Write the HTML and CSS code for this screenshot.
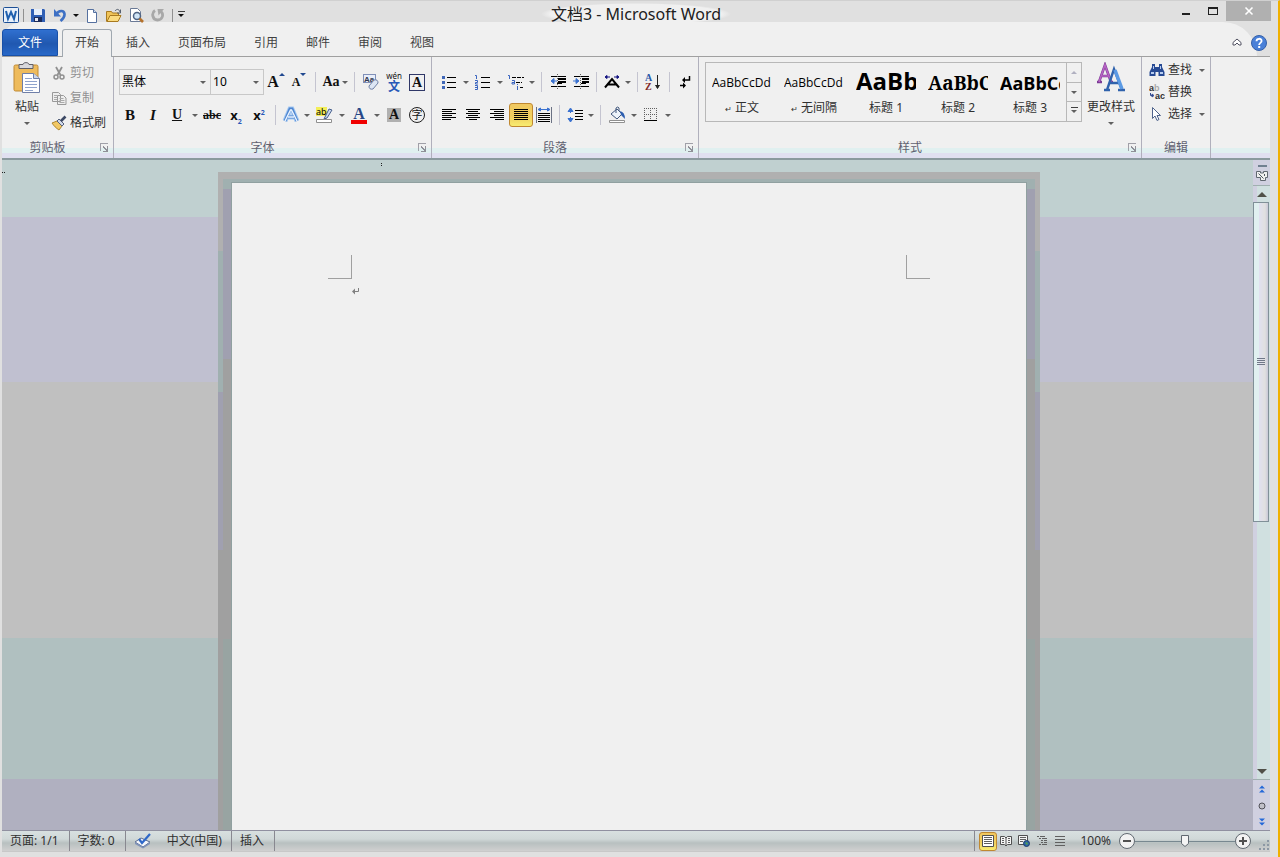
FILE: index.html
```html
<!DOCTYPE html>
<html lang="zh-CN">
<head>
    <meta charset="UTF-8">
    <meta name="viewport" content="width=device-width, initial-scale=1.0">
    <title>文档3 - Microsoft Word</title>
    <link rel="stylesheet" href="styles.css">
</head>
<body>
<div class="window">
    <header class="header">
        <div class="titlebar">
            <div class="quick">
                <button class="quick-button app" aria-label="Word">
                    <svg width="16" height="16" viewBox="0 0 16 16"><rect x=".5" y=".5" width="15" height="15" rx="1" fill="#e8f0fa" stroke="#1c4f96"/><path d="M3 4 5 12 8 5l3 7 2-8" fill="none" stroke="#1f5fae" stroke-width="2"/></svg>
                </button>
                <span class="quick-line"></span>
                <button class="quick-button" aria-label="保存">
                    <svg width="14" height="14" viewBox="0 0 14 14"><path d="M0 1h13l1 1v12H0z" fill="#2f5fb5"/><path d="M3 1h8v6H3z" fill="#e6eefa"/><path d="M3 9h8v5H3z" fill="#1b2c5c"/><path d="M4 10h3v3H4z" fill="#e8e8f0"/></svg>
                </button>
                <button class="quick-button" aria-label="撤消">
                    <svg width="14" height="14" viewBox="0 0 14 14"><path d="M3 6.500C6 2 11 2 11.500 6c.3 3-1.500 5-4 7" fill="none" stroke="#3d70c4" stroke-width="2.600"/><path d="M1 1v7.500h7z" fill="#3d70c4"/></svg>
                </button>
                <button class="quick-drop" aria-label="撤消列表"><i class="arrow dark"></i></button>
                <button class="quick-button" aria-label="新建">
                    <svg width="14" height="15" viewBox="0 0 14 15"><path d="M2.500 1.500h6l3 3v10h-9z" fill="#fff" stroke="#55709f"/><path d="M8.500 1.500v3h3" fill="#cfdcf0" stroke="#55709f"/></svg>
                </button>
                <button class="quick-button" aria-label="打开">
                    <svg width="16" height="15" viewBox="0 0 16 15"><path d="M.5 13.500v-10h5l1 1.500h6v3" fill="#f0c458" stroke="#a87a20"/><path d="M1 13.500 4 7.500h11l-3 6z" fill="#fbdc80" stroke="#a87a20"/><path d="M9 3c2-2.500 4-2 5 1M14.500 1.500V5H11" fill="none" stroke="#556070"/></svg>
                </button>
                <button class="quick-button" aria-label="打印预览">
                    <svg width="15" height="15" viewBox="0 0 15 15"><path d="M1.500 .5h7l3 3v10h-10z" fill="#fff" stroke="#6b7a96"/><circle cx="8" cy="8" r="3.500" fill="#cfe4f6" stroke="#4f6484" stroke-width="1.500"/><path d="m10.500 10.500 3.500 3.500" stroke="#b5722c" stroke-width="2.600"/></svg>
                </button>
                <button class="quick-button" aria-label="恢复">
                    <svg width="14" height="14" viewBox="0 0 14 14"><path d="M4 2.500C0 5 1.500 12 6.500 12S13 6.500 10 3.500" fill="none" stroke="#a8a8a8" stroke-width="2.800"/><path d="M6.500 1H13L7.500 7.500z" fill="#a8a8a8"/></svg>
                </button>
                <span class="quick-line"></span>
                <button class="quick-drop" aria-label="自定义快速访问工具栏"><i class="arrow dark bar"></i></button>
            </div>
            <h1 class="title">文档3 - Microsoft Word</h1>
            <div class="controls">
                <button class="control" aria-label="最小化"><svg width="10" height="10" viewBox="0 0 10 10"><path d="M1 7h8v2H1z" fill="#202020"/></svg></button>
                <button class="control" aria-label="最大化"><svg width="10" height="10" viewBox="0 0 10 10"><path d="M0 1h10v8H0z" fill="#202020"/><path d="M1 3h8v5H1z" fill="#e0e0e0"/></svg></button>
                <button class="control close" aria-label="关闭"><svg width="10" height="10" viewBox="0 0 10 10"><path d="m1.500 1.500 7 7m0-7-7 7" stroke="#fff" stroke-width="1.600"/></svg></button>
            </div>
        </div>
        <nav class="tabs">
            <button class="tab file">文件</button>
            <button class="tab active">开始</button>
            <button class="tab">插入</button>
            <button class="tab">页面布局</button>
            <button class="tab">引用</button>
            <button class="tab">邮件</button>
            <button class="tab">审阅</button>
            <button class="tab">视图</button>
            <span class="spacer"></span>
            <button class="tab-icon" aria-label="功能区最小化"><svg width="10" height="9" viewBox="0 0 10 9"><path d="M1 4.500 5 1l4 3.500V7H7L5 5 3 7H1z" fill="#fff" stroke="#505060"/></svg></button>
            <button class="tab-icon" aria-label="帮助"><svg width="16" height="16" viewBox="0 0 16 16"><circle cx="8" cy="8" r="7.500" fill="#4a80d8" stroke="#3560a8"/><path d="M5.500 6.200C5.500 3 10.600 3 10.600 6c0 1.800-2.500 2-2.500 4" fill="none" stroke="#fff" stroke-width="1.800"/><path d="M7.200 11h2v2h-2z" fill="#fff"/></svg></button>
        </nav>
    </header>

    <section class="ribbon">
        <div class="group">
            <div class="group-body clipboard">
                <button class="big-button paste">
                    <svg width="28" height="32" viewBox="0 0 28 32"><rect x="1" y="3" width="24" height="26" rx="1.500" fill="#eebb5c" stroke="#c08a34"/><path d="M6 2.500h4C10 0 16 0 16 2.500h4v4H6z" fill="#d8d8dc" stroke="#606068"/><path d="M9.500 11.500h11l6 5v14h-17z" fill="#fff" stroke="#6f7fa8"/><path d="M20.500 11.500v5h6" fill="#cdd7ea" stroke="#6f7fa8"/><path d="M12 16.500h7M12 19.500h12M12 22.500h12M12 25.500h12M12 28.500h8" stroke="#8fa3cc"/></svg>
                    <span>粘贴</span>
                    <i class="arrow"></i>
                </button>
                <div class="stack">
                    <button class="text-button" disabled>
                        <svg width="16" height="16" viewBox="0 0 16 16"><path d="M5 2 9.500 10M11 2 6.500 10" stroke="#909090" stroke-width="1.800"/><circle cx="5" cy="12" r="2" fill="none" stroke="#909090" stroke-width="1.500"/><circle cx="11" cy="12" r="2" fill="none" stroke="#909090" stroke-width="1.500"/></svg>
                        剪切
                    </button>
                    <button class="text-button" disabled>
                        <svg width="16" height="16" viewBox="0 0 16 16"><path d="M1.500 2.500h6l2 2v7h-8zM6.500 5.500h6l2.500 2.500v6.500H6.500z" fill="#eee" stroke="#999"/><path d="M3 5.500h3M3 7.500h3M3 9.500h3M8.500 8.500h4M8.500 10.500h5M8.500 12.500h5" stroke="#aaa"/></svg>
                        复制
                    </button>
                    <button class="text-button">
                        <svg width="16" height="16" viewBox="0 0 16 16"><path d="m1 8 5-2 5 5-3 4C5 13 3 11 1 8z" fill="#f2c864" stroke="#b08830"/><path d="m6 6 2-2 5 5-2 2z" fill="#d0d8e8" stroke="#56627c"/><path d="m10 6 4.500-4.500" stroke="#3c4864" stroke-width="2.600"/></svg>
                        格式刷
                    </button>
                </div>
            </div>
            <div class="group-label">剪贴板<button class="launcher" aria-label="剪贴板选项"></button></div>
        </div>

        <div class="group">
            <div class="group-body rows font-tools">
                <div class="row">
                    <select class="combo font-name" aria-label="字体"><option>黑体</option></select>
                    <select class="combo font-size" aria-label="字号"><option>10</option></select>
                    <button class="tool wide" aria-label="增大字体"><span class="serif large">A</span><i class="mark up"></i></button>
                    <button class="tool" aria-label="缩小字体"><span class="serif small">A</span><i class="mark down"></i></button>
                    <span class="sep wide"></span>
                    <button class="tool case" aria-label="更改大小写"><span class="serif">Aa</span><i class="arrow"></i></button>
                    <span class="sep wide"></span>
                    <button class="tool" aria-label="清除格式"><svg width="18" height="18" viewBox="0 0 18 18"><rect x="1.500" y="1.500" width="12" height="8" fill="#e8eefa" stroke="#8090b8"/><text x="2" y="9" class="tiny">Aa</text><path d="m7 13 5-6q4-1 4 3l-5 6q-4 1-4-3z" fill="#dde6f4" stroke="#6f80a4"/></svg></button>
                    <button class="tool wide" aria-label="拼音指南"><span class="pinyin"><small>wén</small><b>文</b></span></button>
                    <button class="tool" aria-label="字符边框"><span class="boxed serif">A</span></button>
                </div>
                <div class="row">
                    <button class="tool" aria-label="加粗"><span class="serif bold">B</span></button>
                    <button class="tool wide" aria-label="倾斜"><span class="serif italic">I</span></button>
                    <button class="tool wide" aria-label="下划线"><span class="serif underline">U</span></button>
                    <button class="drop" aria-label="下划线样式"><i class="arrow"></i></button>
                    <button class="tool wide" aria-label="删除线"><span class="serif strike">abc</span></button>
                    <button class="tool wide" aria-label="下标"><span class="sans">x<sub>2</sub></span></button>
                    <button class="tool" aria-label="上标"><span class="sans">x<sup>2</sup></span></button>
                    <span class="sep wide"></span>
                    <button class="tool narrow" aria-label="文本效果"><svg width="18" height="18" viewBox="0 0 18 18"><path d="M3 15 8 3h2l5 12M6 11h6" fill="none" stroke="#a4c8f2" stroke-width="5"/><path d="M3 15 8 3h2l5 12M6 11h6" fill="none" stroke="#4f86d0" stroke-width="3"/><path d="M3 15 8.500 4h1L15 15M6 11h6" fill="none" stroke="#eaf4ff" stroke-width="1.400"/></svg></button>
                    <button class="drop" aria-label="文本效果列表"><i class="arrow"></i></button>
                    <button class="tool wide" aria-label="突出显示"><svg width="18" height="18" viewBox="0 0 18 18"><path d="M1 1h11v9H1z" fill="#f3ee58"/><text x="1" y="9" class="ab">ab</text><path d="m10 11 4-8 3 1-5 8-3 1z" fill="#c9d8f0" stroke="#48608c"/><path d="M1.500 13.500h15v3h-15z" fill="#fff" stroke="#909090"/></svg></button>
                    <button class="drop" aria-label="突出显示颜色"><i class="arrow"></i></button>
                    <button class="tool wide" aria-label="字体颜色"><span class="serif color-a">A</span></button>
                    <button class="drop" aria-label="字体颜色列表"><i class="arrow"></i></button>
                    <button class="tool wide" aria-label="字符底纹"><span class="serif shaded">A</span></button>
                    <button class="tool" aria-label="带圈字符"><span class="circled">字</span></button>
                </div>
            </div>
            <div class="group-label">字体<button class="launcher" aria-label="字体选项"></button></div>
        </div>

        <div class="group">
            <div class="group-body rows">
                <div class="row">
                    <button class="tool wide" aria-label="项目符号"><svg width="14" height="14" viewBox="0 0 14 14"><path d="M5 2.500h9M5 7.500h9M5 12.500h9" stroke="#000"/><path d="M0 1h3v3H0zM0 6h3v3H0zM0 11h3v3H0z" fill="#4068b8"/></svg></button>
                    <button class="drop" aria-label="项目符号库"><i class="arrow"></i></button>
                    <button class="tool wide" aria-label="编号"><svg width="16" height="16" viewBox="0 0 16 16"><path d="M6 3.500h9M6 8.500h9M6 13.500h9" stroke="#000"/><path d="M0 1.500h1.500V5M0 6.500h2.500v2H.5v1.500H3M0 11.500h2.500v4H0M0 13.500h2" fill="none" stroke="#3c66c0"/></svg></button>
                    <button class="drop" aria-label="编号库"><i class="arrow"></i></button>
                    <button class="tool" aria-label="多级列表"><svg width="18" height="16" viewBox="0 0 18 16"><path d="M5 3.500h12M9 8.500h6M13 13.500h3" stroke="#000" stroke-dasharray="4 1"/><path d="M1 1.500h1.500V5M5 6.500h2.500V10H5V8.500h2.500M10.500 12v4M10.500 10v1" fill="none" stroke="#3c66c0"/></svg></button>
                    <button class="drop" aria-label="多级列表库"><i class="arrow"></i></button>
                    <span class="sep"></span>
                    <button class="tool wide" aria-label="减少缩进量"><svg width="16" height="16" viewBox="0 0 16 16"><path d="M1 2.500h15M7 9.500h5M1 12.500h15" stroke="#000"/><path d="M8 4h8v2H8zM8 7h8v2H8z"/><path d="M4 7h3M1 7l3-2.500v5z" fill="#3b72d0" stroke="#3b72d0"/><path d="M7.500 0v16" stroke="#606060" stroke-dasharray="1 1"/></svg></button>
                    <button class="tool" aria-label="增加缩进量"><svg width="16" height="16" viewBox="0 0 16 16"><path d="M1 2.500h15M8 9.500h5M1 12.500h15" stroke="#000"/><path d="M9 4h7v2H9zM9 7h7v2H9z"/><path d="M0 7h3M6 7 3 4.500v5z" fill="#3b72d0" stroke="#3b72d0"/><path d="M7.500 0v16" stroke="#606060" stroke-dasharray="1 1"/></svg></button>
                    <span class="sep"></span>
                    <button class="tool" aria-label="中文版式"><svg width="16" height="16" viewBox="0 0 16 16"><path d="M1 13.500 8 5l7 8.500M4 10.500h8" fill="none" stroke="#000" stroke-width="2"/><path d="m1 3 2-1.500v3zM15 3l-2-1.500v3zM3 3h3M10 3h3" fill="#101080" stroke="#101080"/></svg></button>
                    <button class="drop" aria-label="中文版式列表"><i class="arrow"></i></button>
                    <span class="sep"></span>
                    <button class="tool" aria-label="排序"><svg width="16" height="18" viewBox="0 0 16 18"><text x="0" y="8" class="sort-a">A</text><text x="0" y="17" class="sort-z">Z</text><path d="M12.500 2v13M10.500 12l2 3.500 2-3.500" fill="#222" stroke="#222"/></svg></button>
                    <span class="sep wide"></span>
                    <button class="tool narrow" aria-label="显示编辑标记"><svg width="12" height="14" viewBox="0 0 12 14"><path d="M10.500 1v4H5M1 10.500h5" fill="none" stroke="#000" stroke-width="1.500"/><path d="m3 5 3-3v6zM7 10.500l-3-3v6z"/></svg></button>
                </div>
                <div class="row">
                    <button class="tool wide" aria-label="左对齐"><svg width="14" height="14" viewBox="0 0 14 14"><path d="M0 1.500h14M0 3.500h10M0 5.500h14M0 7.500h10M0 9.500h14M0 11.500h9" stroke="#000"/></svg></button>
                    <button class="tool wide" aria-label="居中"><svg width="14" height="14" viewBox="0 0 14 14"><path d="M0 1.500h14M2 3.500h10M0 5.500h14M2 7.500h10M0 9.500h14M3 11.500h8" stroke="#000"/></svg></button>
                    <button class="tool wide" aria-label="右对齐"><svg width="14" height="14" viewBox="0 0 14 14"><path d="M0 1.500h14M4 3.500h10M0 5.500h14M4 7.500h10M0 9.500h14M5 11.500h9" stroke="#000"/></svg></button>
                    <button class="tool wide pressed" aria-label="两端对齐"><svg width="14" height="14" viewBox="0 0 14 14"><path d="M0 1.500h14M0 3.500h14M0 5.500h14M0 7.500h14M0 9.500h14M0 11.500h14" stroke="#000"/></svg></button>
                    <button class="tool" aria-label="分散对齐"><svg width="16" height="16" viewBox="0 0 16 16"><path d="M.5 0v16M15.500 0v16" stroke="#6b7284"/><path d="M2 6.500h12M2 8.500h12M2 10.500h12M2 12.500h12M2 14.500h12" stroke="#000"/><path d="M3 2.500h10M2 2.500l2.500-1.500v3zM14 2.500l-2.500-1.500v3z" fill="#3b72d0" stroke="#3b72d0"/></svg></button>
                    <span class="sep"></span>
                    <button class="tool" aria-label="行距"><svg width="16" height="16" viewBox="0 0 16 16"><path d="M8 3.500h8M8 6.500h8M8 9.500h8M8 12.500h8" stroke="#000"/><path d="M3.500 1 1 4.500h5zM3.500 15 1 11.500h5zM3.500 3v3M3.500 10v3" fill="#3b72d0" stroke="#3b72d0"/></svg></button>
                    <button class="drop" aria-label="行距列表"><i class="arrow"></i></button>
                    <span class="sep"></span>
                    <button class="tool wide" aria-label="底纹"><svg width="18" height="18" viewBox="0 0 18 18"><path d="m3 8 6-5 5 5-5 5z" fill="#eef4fb" stroke="#42597e"/><path d="M8 7V2q2-2 3 0v3" fill="none" stroke="#42597e"/><path d="M12 5q5 1 5 8l-4-4z" fill="#2e5fb0"/><path d="M1.500 14.500h15v2h-15z" fill="#fff" stroke="#909090"/></svg></button>
                    <button class="drop" aria-label="底纹颜色"><i class="arrow"></i></button>
                    <button class="tool wide" aria-label="边框"><svg width="14" height="14" viewBox="0 0 14 14"><path d="M0 .5h13M0 6.500h13M.5 0v12M6.500 0v12M12.500 0v12" stroke="#606060" stroke-dasharray="1 1"/><path d="M0 12.500h13" stroke="#000"/></svg></button>
                    <button class="drop" aria-label="边框列表"><i class="arrow"></i></button>
                </div>
            </div>
            <div class="group-label">段落<button class="launcher" aria-label="段落选项"></button></div>
        </div>

        <div class="group">
            <div class="group-body styles">
                <div class="gallery">
                    <button class="style-item"><span class="sample">AaBbCcDd</span><span><small class="ret">↵</small> 正文</span></button>
                    <button class="style-item"><span class="sample">AaBbCcDd</span><span><small class="ret">↵</small> 无间隔</span></button>
                    <button class="style-item"><span class="sample h1">AaBb</span><span>标题 1</span></button>
                    <button class="style-item"><span class="sample h2">AaBbC</span><span>标题 2</span></button>
                    <button class="style-item"><span class="sample h3">AaBbCc</span><span>标题 3</span></button>
                    <div class="gallery-scroll">
                        <button aria-label="上一行" disabled><i class="arrow flip"></i></button>
                        <button aria-label="下一行"><i class="arrow"></i></button>
                        <button aria-label="其他"><i class="arrow bar"></i></button>
                    </div>
                </div>
                <button class="big-button">
                    <svg width="32" height="32" viewBox="0 0 32 32"><path d="m4 20 6-17 6 17M7 14h7M2 20h5M14 20h4" fill="none" stroke="#7a3a94" stroke-width="2.600"/><path d="m4 20 6-17 6 17M7 14h7" fill="none" stroke="#b763c4" stroke-width="1.600"/><path d="m12 28 7-21 8 21M15 21h9M9 28h6M23 28h7" fill="none" stroke="#2f62ac" stroke-width="2.400"/><path d="m20 8 7 19" stroke="#5b9ae4" stroke-width="3.500"/></svg>
                    <span>更改样式</span>
                    <i class="arrow"></i>
                </button>
            </div>
            <div class="group-label">样式<button class="launcher" aria-label="样式选项"></button></div>
        </div>

        <div class="group">
            <div class="group-body edit">
                <button class="text-button">
                    <svg width="16" height="16" viewBox="0 0 16 16"><path d="M3 2h3v3h4V2h3v3l2.500 5v4H9.500v-4h-3v4H.5v-4L3 5z" fill="#274a94"/><path d="M2 10h3v2H2zM11 10h3v2h-3zM4 4h1v3H4zM11 4h1v3h-1z" fill="#b8cdf0"/></svg>
                    查找<i class="arrow"></i>
                </button>
                <button class="text-button">
                    <svg width="16" height="16" viewBox="0 0 16 16"><text x="0" y="7" class="rep">a<tspan fill="#aaa">b</tspan></text><text x="6" y="15" class="rep">ac</text><path d="M1.500 9v2.500H4M3 10l2 1.500L3 13z" fill="none" stroke="#304890"/></svg>
                    替换
                </button>
                <button class="text-button">
                    <svg width="16" height="16" viewBox="0 0 16 16"><path d="M3.500 1.500v11l2.500-2.500 2 4.500 2-1-2-4h3.500z" fill="#fff" stroke="#50648c"/></svg>
                    选择<i class="arrow"></i>
                </button>
            </div>
            <div class="group-label">编辑</div>
        </div>
    </section>

    <main class="workspace">
        <div class="canvas">
            <i class="ruler-dots left"></i>
            <i class="ruler-dots top"></i>
            <div class="page-shadow">
                <div class="page-edge">
                    <article class="page">
                        <div class="crop-marks"><i class="crop"></i><i class="crop right"></i></div>
                        <p class="paragraph"><svg width="8" height="8" viewBox="0 0 8 8"><path d="M6.500 1v3.500H2" fill="none" stroke="#808080"/><path d="m0 4.500 3-3v6z" fill="#808080"/></svg></p>
                    </article>
                </div>
            </div>
        </div>
        <aside class="scrollbar">
            <button class="ruler-toggle" aria-label="标尺">
                <svg width="12" height="18" viewBox="0 0 12 18"><path d="M2 1h9v2H2z" fill="#708090"/><path d="M.5 7.500h4v1.500h3V7.500h4v6h-2v3h-5v-3h-4z" fill="#f0f0f0" stroke="#606870"/><path d="m2.500 9.500 5 5M8.500 10v2" stroke="#505860"/></svg>
            </button>
            <button class="scroll-button" aria-label="向上滚动"><i class="arrow scroll flip"></i></button>
            <div class="track">
                <div class="thumb"><i class="grip"></i></div>
            </div>
            <button class="scroll-button" aria-label="向下滚动"><i class="arrow scroll"></i></button>
            <div class="browse">
                <button aria-label="前一页"><svg width="6" height="8" viewBox="0 0 6 8"><path d="m0 3.500 3-3 3 3zM0 7.500l3-3 3 3z" fill="#2468d8"/></svg></button>
                <button aria-label="选择浏览对象"><svg width="8" height="8" viewBox="0 0 8 8"><circle cx="4" cy="4" r="3" fill="#c0c0c8" stroke="#505058"/></svg></button>
                <button aria-label="下一页"><svg width="6" height="8" viewBox="0 0 6 8"><path d="m0 .5 3 3 3-3zM0 4.500l3 3 3-3z" fill="#2468d8"/></svg></button>
            </div>
        </aside>
    </main>

    <footer class="status">
        <button class="status-item">页面: 1/1</button>
        <button class="status-item">字数: 0</button>
        <button class="status-item proof" aria-label="校对"><svg width="18" height="16" viewBox="0 0 18 16"><path d="m1 9 6-4 9 4-7 5z" fill="#f4f6fa" stroke="#5a6c90"/><path d="m1 9 8 5 7-5v2l-7 4.500L1 11z" fill="#7f92b8"/><path d="m5 6 3 4 8-9" fill="none" stroke="#2f68c8" stroke-width="2.200"/></svg></button>
        <button class="status-item language">中文(中国)</button>
        <button class="status-item">插入</button>
        <span class="spacer"></span>
        <div class="views">
            <button class="view pressed" aria-label="页面视图"><svg width="12" height="12" viewBox="0 0 12 12"><path d="M.5.5h11v11H.5z" fill="#fff" stroke="#505050"/><path d="M2 2.500h8M2 4.500h8M2 6.500h8M2 8.500h8" stroke="#606060"/></svg></button>
            <button class="view" aria-label="阅读版式"><svg width="12" height="12" viewBox="0 0 12 12"><path d="M.5 1.500h4L6 3l1.500-1.500h4v8h-4L6 11 4.500 9.500h-4zM6 3v8" fill="#f4f4f4" stroke="#505050"/><path d="M2 3.500h2M2 5.500h2M2 7.500h2M8 3.500h2M8 5.500h2M8 7.500h2" stroke="#606060"/></svg></button>
            <button class="view" aria-label="Web 版式"><svg width="12" height="12" viewBox="0 0 12 12"><path d="M.5.5h9v9h-9z" fill="#f4f4f4" stroke="#505050"/><path d="M2 2.500h6M2 4.500h6M2 6.500h3" stroke="#606060"/><circle cx="8.500" cy="8.500" r="3" fill="#2d62a8" stroke="#204068"/><path d="m7 8 2-1 1 2-1 1z" fill="#50a050"/></svg></button>
            <button class="view" aria-label="大纲"><svg width="12" height="12" viewBox="0 0 12 12"><path d="M1 1.500h8M3 3.500h8M5 5.500h6M5 7.500h6M3 9.500h8" stroke="#606060" stroke-dasharray="2 1 8 0"/></svg></button>
            <button class="view" aria-label="草稿"><svg width="12" height="12" viewBox="0 0 12 12"><path d="M1 1.500h10M1 4.500h10M1 7.500h10M1 10.500h10" stroke="#606060"/></svg></button>
        </div>
        <button class="percent">100%</button>
        <div class="zoom">
            <button class="round" aria-label="缩小"><svg width="16" height="16" viewBox="0 0 16 16"><circle cx="8" cy="8" r="7.500" fill="#f2f2f2" stroke="#606870"/><path d="M4 7h8v2H4z" fill="#505050"/></svg></button>
            <input class="slider" type="range" min="0" max="100" value="50" aria-label="显示比例">
            <button class="round" aria-label="放大"><svg width="16" height="16" viewBox="0 0 16 16"><circle cx="8" cy="8" r="7.500" fill="#f2f2f2" stroke="#606870"/><path d="M4 7h8v2H4zM7 4h2v8H7z" fill="#505050"/></svg></button>
        </div>
        <svg class="resize" width="10" height="11" viewBox="0 0 10 11"><path d="M8 0h2v2H8zM4 4h2v2H4zM8 4h2v2H8zM0 8h2v2H0zM4 8h2v2H4zM8 8h2v2H8z" fill="#8c98a4"/></svg>
    </footer>
</div>
</body>
</html>
```
FILE: styles.css
```css
* {
    box-sizing: border-box;
}
body {
    margin: 0;
    height: 100vh;
    background: #e0e0e0;
    font-family: "Noto Sans", "Noto Sans CJK SC", sans-serif;
    font-size: 12px;
    line-height: 16px;
    color: #303030;
}
button {
    margin: 0;
    padding: 0;
    border: 0;
    background: none;
    font: inherit;
    color: inherit;
    display: flex;
    align-items: center;
    justify-content: center;
    cursor: pointer;
}
svg {
    display: block;
    flex: none;
}
.window {
    height: 100%;
    min-width: 1240px;
    display: flex;
    flex-direction: column;
    padding: 0 8px 5px 2px;
    border-top: 1px solid #d0d0d0;
    border-right: 2px solid #f0b000;
}
.spacer {
    flex: 1;
}

/* drop arrows */
.arrow {
    flex: none;
    width: 0;
    height: 0;
    border: 3px solid transparent;
    border-top-color: #606060;
    border-bottom: 0;
}
.arrow.dark {
    border-top-color: #101010;
}
.arrow.flip {
    border-top: 0;
    border-bottom: 3px solid #b0b0c0;
}
.arrow.bar::before {
    content: "";
    display: block;
    width: 7px;
    height: 1px;
    margin: -6px 0 0 -3px;
    background: #404040;
}
.arrow.scroll {
    border-width: 5px;
    border-bottom-width: 0;
    border-top-color: #505048;
}
.arrow.scroll.flip {
    border-top-width: 0;
    border-bottom: 5px solid #505048;
}

/* title bar and tabs */
.header {
    position: relative;
    z-index: 0;
}
.header::before {
    content: "";
    position: absolute;
    z-index: -1;
    inset: 21px 13px 0 0;
    background: #f0f0f0;
    border-radius: 20px 34px 0 0;
}
.titlebar {
    height: 28px;
    display: grid;
    grid-template-columns: 1fr auto 1fr;
    align-items: start;
}
.quick {
    display: flex;
    align-items: center;
    height: 28px;
}
.quick-button {
    width: 22px;
    height: 22px;
}
.quick-button.app {
    width: 18px;
}
.quick-drop {
    width: 10px;
    height: 22px;
}
.quick-line {
    width: 1px;
    height: 13px;
    margin: 0 3px;
    background: #909090;
}
.title {
    margin: 2px 0 0;
    padding: 0 10px;
    font-size: 16px;
    line-height: 22px;
    font-weight: normal;
    color: #202020;
    background: radial-gradient(closest-side, #f0f0f0 90%, transparent);
}
.controls {
    display: flex;
    justify-content: flex-end;
    margin-right: -1px;
}
.control {
    width: 27px;
    height: 20px;
}
.close {
    width: 45px;
    background: #b0b0b0;
}
.tabs {
    height: 28px;
    display: flex;
    border-bottom: 1px solid #a0a0a0;
}
.tab {
    padding: 0 14px;
    color: #404040;
}
.tab.file {
    padding: 0 15px;
    border: 1px solid #1850a8;
    border-radius: 3px 3px 0 0;
    background: linear-gradient(#3070d0, #2058b0 55%, #2868c8);
    color: #fff;
}
.tab.active {
    margin: 0 0 -1px 4px;
    padding: 0 12px 1px;
    border: 1px solid #a0a8b0;
    border-bottom: 0;
    border-radius: 3px 3px 0 0;
    background: #f0f0f0;
}
.tab-icon {
    width: 22px;
}

/* ribbon */
.ribbon {
    display: flex;
    height: 103px;
    background: linear-gradient(#f0f0f0 91px, #e0f0f0 91px, #e0f0f0 96px, #e0e0f0 96px);
    border-bottom: 2px solid #8a9a9e;
}
.group {
    display: flex;
    flex-direction: column;
    border-right: 1px solid #b0b0bc;
    padding: 0 1px;
}
.group-body {
    height: 81px;
    display: flex;
}
.group-label {
    position: relative;
    height: 20px;
    line-height: 20px;
    padding-right: 20px;
    text-align: center;
    color: #606070;
}
.group:last-child .group-label {
    padding-right: 0;
}
.launcher {
    position: absolute;
    right: 4px;
    top: 5px;
    width: 8px;
    height: 8px;
    border-top: 1px solid #a0a0a8;
    border-left: 1px solid #a0a0a8;
}
.launcher::after {
    content: "";
    width: 5px;
    height: 5px;
    margin: 2px 0 0 2px;
    border-right: 1px solid #909098;
    border-bottom: 1px solid #909098;
    background: linear-gradient(45deg, transparent 40%, #909098 40%, #909098 60%, transparent 60%);
}
.clipboard {
    padding: 0 2px 0 4px;
}
.big-button {
    width: 58px;
    height: 76px;
    padding-top: 5px;
    flex-direction: column;
    justify-content: flex-start;
}
.big-button span {
    margin: 5px 0 7px;
}
.paste {
    width: 40px;
}
.stack {
    padding-top: 3px;
}
.text-button {
    height: 25px;
    gap: 3px;
    padding: 0 4px;
}
.text-button:disabled {
    color: #909090;
}
.rows {
    flex-direction: column;
    gap: 8px;
    padding: 12px 2px 0 4px;
}
.row {
    display: flex;
    align-items: center;
    height: 26px;
}
.row + .row {
    height: 24px;
}
.tool {
    width: 22px;
    height: 24px;
    color: #101010;
}
.tool.wide {
    width: 24px;
}
.tool.narrow {
    width: 20px;
}
.drop {
    width: 10px;
    height: 24px;
}
.font-tools .drop {
    width: 11px;
}
.sep {
    width: 1px;
    height: 20px;
    margin: 0 4px;
    background: #c4c4d0;
}
.sep.wide {
    margin: 0 5px;
}
.combo {
    height: 26px;
    padding: 0 2px;
    border: 1px solid #c8c8c8;
    border-radius: 0;
    appearance: none;
    font: inherit;
    color: #000;
    background: url("data:image/svg+xml,%3Csvg xmlns='http://www.w3.org/2000/svg' width='6' height='3'%3E%3Cpath d='M0 0h6L3 3z' fill='%23606060'/%3E%3C/svg%3E") no-repeat right 4px center #f0f0f0;
}
.font-name {
    width: 92px;
}
.font-size {
    width: 54px;
    margin-left: -1px;
}
.serif {
    font-family: "Liberation Serif", serif;
    font-weight: bold;
    font-size: 14px;
}
.large {
    font-size: 16px;
}
.small {
    font-size: 12px;
}
.mark {
    align-self: flex-start;
    margin-top: 3px;
    border: 3px solid transparent;
}
.mark.up {
    border-top: 0;
    border-bottom-color: #204890;
}
.mark.down {
    border-bottom: 0;
    border-top-color: #204890;
}
.tool.case {
    width: 28px;
    gap: 2px;
}
.tiny {
    font: bold 8px "Liberation Sans", sans-serif;
    fill: #303850;
}
.ab {
    font: 9px "Noto Sans", sans-serif;
}
.pinyin {
    display: flex;
    flex-direction: column;
    align-items: center;
}
.pinyin small {
    font-size: 8px;
    line-height: 10px;
}
.pinyin b {
    color: #2858b8;
    font-size: 12px;
    line-height: 12px;
}
.boxed {
    width: 16px;
    border: 1px solid #303868;
    line-height: 15px;
}
.bold,
.italic {
    font-size: 15px;
}
.italic {
    font-style: italic;
}
.underline {
    text-decoration: underline;
}
.strike {
    font-size: 12px;
    text-decoration: line-through;
}
.sans {
    font-weight: bold;
    font-size: 13px;
}
.sans sub,
.sans sup {
    font-size: 7px;
    line-height: 0;
    color: #2858b8;
}
.color-a {
    width: 16px;
    line-height: 13px;
    border-bottom: 4px solid #f00000;
    color: #284888;
    font-size: 16px;
}
.shaded {
    width: 14px;
    line-height: 14px;
    background: #b0b0b0;
}
.circled {
    width: 16px;
    height: 16px;
    line-height: 14px;
    border: 1px solid #202020;
    border-radius: 50%;
    font-size: 11px;
}
.pressed {
    border: 1px solid #c08830;
    border-radius: 3px;
    background: linear-gradient(#f0c860, #f0d060 60%, #f8ec70);
}
.sort-a,
.sort-z {
    font: bold 10px "Liberation Serif", serif;
    fill: #2858a8;
}
.sort-z {
    fill: #802828;
}
.rep {
    font: bold 9px "Liberation Sans", sans-serif;
    fill: #303030;
}

/* style gallery */
.styles {
    padding-left: 5px;
}
.gallery {
    display: flex;
    height: 60px;
    margin-top: 5px;
    border: 1px solid #b8b8b8;
}
.style-item {
    width: 72px;
    flex-direction: column;
    justify-content: flex-start;
}
.sample {
    width: 60px;
    height: 37px;
    line-height: 40px;
    overflow: hidden;
    white-space: nowrap;
    text-align: left;
    color: #000;
    font-family: "Open Sans", sans-serif;
}
.sample.h1 {
    font-size: 24px;
    line-height: 36px;
    font-weight: bold;
}
.sample.h2 {
    font-family: "Noto Serif", "DejaVu Serif", serif;
    font-size: 19px;
    font-weight: bold;
}
.sample.h3 {
    font-size: 18px;
    font-weight: bold;
}
.ret {
    font-size: 8px;
}
.gallery-scroll {
    width: 15px;
    display: flex;
    flex-direction: column;
    border-left: 1px solid #b8b8b8;
}
.gallery-scroll button {
    flex: 1;
}
.gallery-scroll button + button {
    border-top: 1px solid #b8b8b8;
}
.edit {
    flex-direction: column;
    align-items: flex-start;
    padding: 2px 0 0 2px;
}
.edit .text-button {
    height: 22px;
}
.edit .arrow {
    margin-left: 4px;
}

/* document area */
.workspace {
    flex: 1;
    min-height: 0;
    display: flex;
    background: linear-gradient(#c0d0d0 57px, #c0c0d0 57px, #c0c0d0 222px, #c0c0c0 222px, #c0c0c0 478px, #b0c0c0 478px, #b0c0c0 619px, #b0b0c0 619px);
}
.canvas {
    position: relative;
    flex: 1;
    padding: 12px 0 0 3px;
    display: flex;
    justify-content: center;
}
.ruler-dots {
    position: absolute;
    left: 0;
    top: 12px;
    width: 3px;
    height: 1px;
    background: linear-gradient(to right, #202020 1px, transparent 1px, transparent 2px, #202020 2px);
}
.ruler-dots.top {
    left: 379px;
    top: 3px;
    width: 1px;
    height: 3px;
    background: linear-gradient(#202020 1px, transparent 1px, transparent 2px, #202020 2px);
}
.page-shadow {
    width: 822px;
    display: flex;
    padding: 7px 5px 0;
    background: linear-gradient(#b0b0b0 79px, #a0b0b0 79px, #a0b0b0 220px, #a0a0b0 220px, #a0a0b0 378px, #a0a0a0 378px);
}
.page-edge {
    flex: 1;
    display: flex;
    padding: 3px 8px 0;
    background: linear-gradient(#a0b0b0 10px, #a0a0b0 10px, #a0a0b0 180px, #a0a0a0 180px, #a0a0a0 460px, #98a4a2 460px);
}
.page {
    flex: 1;
    padding: 72px 96px 0;
    background: #f0f0f0;
    border: 1px solid #90a0a0;
    border-bottom: 0;
}
.crop-marks {
    display: flex;
    justify-content: space-between;
}
.crop {
    width: 24px;
    height: 24px;
    border-right: 1px solid #a0a0a0;
    border-bottom: 1px solid #a0a0a0;
}
.crop.right {
    border-right: 0;
    border-left: 1px solid #a0a0a0;
}
.paragraph {
    margin: 8px 24px;
}
.scrollbar {
    width: 17px;
    display: flex;
    flex-direction: column;
    background: linear-gradient(to right, #d0d0e0 4px, #d0e0e0 4px);
}
.ruler-toggle {
    height: 26px;
    background: #d0d0e0;
    border-bottom: 1px solid #a0b0b0;
}
.scroll-button {
    height: 16px;
}
.track {
    flex: 1;
}
.thumb {
    width: 16px;
    height: 57%;
    border: 1px solid #809098;
    background: linear-gradient(to right, #e0f0f0 5px, #e0e0f0 5px, #e0e0e8 8px, #e0e0e0 11px, #c8c8d8);
    display: flex;
    align-items: center;
    justify-content: center;
}
.grip {
    width: 8px;
    height: 7px;
    background: repeating-linear-gradient(#707888 0, #707888 1px, transparent 1px, transparent 2px);
}
.browse {
    height: 51px;
    display: flex;
    flex-direction: column;
    justify-content: space-between;
    align-items: center;
    padding: 5px 0 4px;
    background: #d0d0e0;
    border-top: 1px solid #a0b0b0;
}

/* status bar */
.status {
    height: 22px;
    display: flex;
    align-items: stretch;
    border-top: 1px solid #9090a0;
    border-bottom: 1px solid #c8c8c8;
    background: linear-gradient(#d8e0e0, #d0d8d8 40%, #b8c0c0 60%, #d0d0d0);
}
.status-item {
    padding: 0 10px 0 8px;
    border-right: 1px solid #888890;
}
.status-item.proof {
    padding: 0 0 0 8px;
    border-right: 0;
}
.status-item.language {
    padding: 0 9px 0 15px;
}
.views {
    display: flex;
    align-items: center;
    padding-left: 4px;
    border-left: 1px solid #888890;
}
.view {
    width: 18px;
    height: 19px;
}
.percent {
    padding: 0 8px 0 11px;
}
.zoom {
    display: flex;
    align-items: center;
}
.slider {
    width: 100px;
    height: 16px;
    margin: 0;
    appearance: none;
    background: linear-gradient(#788890, #788890) no-repeat center / 100% 1px;
}
.slider::-webkit-slider-thumb {
    appearance: none;
    width: 10px;
    height: 14px;
    background: url("data:image/svg+xml,%3Csvg xmlns='http://www.w3.org/2000/svg' width='10' height='14'%3E%3Cpath d='M1.500 1.500h7v8L5 12.500 1.500 9.500z' fill='%23f4f4f4' stroke='%23606870'/%3E%3C/svg%3E");
}
.resize {
    align-self: flex-end;
    margin: 0 1px 0 8px;
}
```
